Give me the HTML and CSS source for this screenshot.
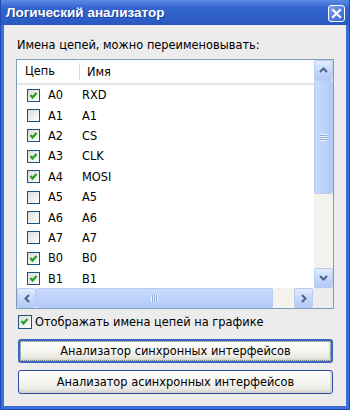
FILE: index.html
```html
<!DOCTYPE html>
<html lang="ru">
<head>
<meta charset="UTF-8">
<title>Логический анализатор</title>
<link rel="stylesheet" href="styles.css">
</head>
<body>

<div class="window">
  <div class="titlebar">
    <span class="title">Логический анализатор</span>
    <span class="close">
      <svg width="15" height="15" viewBox="0 0 15 15"><path d="M4 4 L11 11 M11 4 L4 11" stroke="#fff" stroke-width="2.2" stroke-linecap="square"/></svg>
    </span>
  </div>

  <div class="client">
    <p class="caption">Имена цепей, можно переименовывать:</p>

    <div class="listbox">
      <div class="list-top">
        <div class="list-view">
          <div class="list-header">
            <span class="hcol1">Цепь</span>
            <span class="hcol2">Имя</span>
          </div>
          <div class="row"><span class="cb on"></span><span class="c1">A0</span><span class="c2">RXD</span></div>
          <div class="row"><span class="cb"></span><span class="c1">A1</span><span class="c2">A1</span></div>
          <div class="row"><span class="cb on"></span><span class="c1">A2</span><span class="c2">CS</span></div>
          <div class="row"><span class="cb on"></span><span class="c1">A3</span><span class="c2">CLK</span></div>
          <div class="row"><span class="cb on"></span><span class="c1">A4</span><span class="c2">MOSI</span></div>
          <div class="row"><span class="cb"></span><span class="c1">A5</span><span class="c2">A5</span></div>
          <div class="row"><span class="cb"></span><span class="c1">A6</span><span class="c2">A6</span></div>
          <div class="row"><span class="cb"></span><span class="c1">A7</span><span class="c2">A7</span></div>
          <div class="row"><span class="cb on"></span><span class="c1">B0</span><span class="c2">B0</span></div>
          <div class="row"><span class="cb on"></span><span class="c1">B1</span><span class="c2">B1</span></div>
        </div>

        <div class="vscroll">
          <span class="sbtn">
            <svg width="9" height="6" viewBox="0 0 9 6"><path d="M1 5 L4.5 1.5 L8 5" fill="none" stroke="#4d6185" stroke-width="2"/></svg>
          </span>
          <span class="vthumb"><span class="grip"></span></span>
          <span class="vtrack"></span>
          <span class="sbtn">
            <svg width="9" height="6" viewBox="0 0 9 6"><path d="M1 1 L4.5 4.5 L8 1" fill="none" stroke="#4d6185" stroke-width="2"/></svg>
          </span>
        </div>
      </div>

      <div class="hscroll">
        <span class="sbtn">
          <svg width="6" height="9" viewBox="0 0 6 9"><path d="M5 1 L1.5 4.5 L5 8" fill="none" stroke="#4d6185" stroke-width="2"/></svg>
        </span>
        <span class="hthumb"><span class="grip"></span></span>
        <span class="htrack"></span>
        <span class="sbtn">
          <svg width="6" height="9" viewBox="0 0 6 9"><path d="M1 1 L4.5 4.5 L1 8" fill="none" stroke="#4d6185" stroke-width="2"/></svg>
        </span>
        <span class="corner"></span>
      </div>
    </div>

    <label class="check-line"><span class="cb on"></span>Отображать имена цепей на графике</label>

    <button class="btn default">Анализатор синхронных интерфейсов</button>
    <button class="btn">Анализатор асинхронных интерфейсов</button>
  </div>
</div>

</body>
</html>
```

FILE: styles.css
```css
body {
  margin: 0;
  background: #fff;
  font-family: "DejaVu Sans", Verdana, sans-serif;
  font-size: 11.4px;
  color: #000;
}

.window {
  width: 350px;
  height: 410px;
  box-sizing: border-box;
  display: flex;
  flex-direction: column;
  background: #3d6fd4;
  border: 1px solid #1c4bb4;
  border-top: 0;
}

.titlebar {
  height: 25px;
  display: flex;
  align-items: center;
  justify-content: space-between;
  padding: 0 4px 0 5px;
  background: linear-gradient(#5b8ae6, #3566cf 30%, #2c5cc6 80%, #2a58bf);
}
.title {
  color: #fff;
  font-family: "Liberation Sans", Arial, sans-serif;
  font-weight: bold;
  font-size: 13.5px;
  text-shadow: 1px 1px 0 #1a3f9a;
}
.close {
  width: 15px;
  height: 15px;
  border: 1px solid #fff;
  border-radius: 3px;
  background: linear-gradient(135deg, #7ea6ee, #4a7bdc 60%, #3a69cc);
  display: flex;
  margin-top: 1px;
}

.client {
  flex: 1;
  margin: 0 3px 3px 3px;
  background: #ececec;
  padding: 13px 12px 0 12px;
  display: flex;
  flex-direction: column;
}

.caption {
  margin: 0 0 7px 1px;
  line-height: 14px;
}

.listbox {
  height: 250px;
  box-sizing: border-box;
  border: 1px solid #7f9db9;
  background: #fff;
  display: flex;
  flex-direction: column;
}
.list-top {
  flex: 1;
  display: flex;
  overflow: hidden;
}
.list-view {
  flex: 1;
  overflow: hidden;
}

.list-header {
  height: 23px;
  display: flex;
  align-items: center;
  border-bottom: 2px solid #e4e4e0;
}
.hcol1 {
  width: 54px;
  padding-left: 8px;
  border-right: 1px solid #dcdcd6;
  line-height: 17px;
}
.hcol2 {
  padding-left: 7px;
}

.row {
  height: 20.4px;
  display: flex;
  align-items: center;
  padding-left: 10px;
}
.c1 {
  width: 34px;
  padding-left: 8px;
}

.cb {
  width: 11px;
  height: 11px;
  border: 1px solid #1c5180;
  background: linear-gradient(135deg, #dcdcd7, #fff);
  display: inline-block;
  flex: none;
}
.cb.on {
  background: url("data:image/svg+xml;utf8,<svg xmlns='http://www.w3.org/2000/svg' width='11' height='11'><path d='M2.5 5 L4.5 7.5 L8.5 3' fill='none' stroke='%2321a121' stroke-width='2.2'/></svg>"), linear-gradient(135deg, #dcdcd7, #fff);
}

.vscroll {
  width: 19px;
  display: flex;
  flex-direction: column;
  background: #f4f3ee;
}
.hscroll {
  height: 20px;
  display: flex;
  background: #f4f3ee;
}
.sbtn {
  width: 19px;
  height: 20px;
  box-sizing: border-box;
  border: 1px solid #b7cbf3;
  border-radius: 2px;
  background: linear-gradient(#e3ecfd, #c3d5fb 60%, #b3cbf6);
  display: flex;
  align-items: center;
  justify-content: center;
  flex: none;
}
.vthumb {
  height: 114px;
  box-sizing: border-box;
  border: 1px solid #b8ccf5;
  border-radius: 2px;
  background: linear-gradient(90deg, #cadbfd, #bcd2fb 60%, #b0c8f5);
  display: flex;
  align-items: center;
  justify-content: center;
}
.vthumb .grip {
  width: 7px;
  height: 7px;
  background: repeating-linear-gradient(#eef3fe 0 1px, #8fa8dc 1px 2px);
}
.vtrack {
  flex: 1;
}
.hthumb {
  width: 237px;
  box-sizing: border-box;
  border: 1px solid #b8ccf5;
  border-radius: 2px;
  background: linear-gradient(#cadbfd, #bcd2fb 60%, #b0c8f5);
  display: flex;
  align-items: center;
  justify-content: center;
}
.hthumb .grip {
  width: 7px;
  height: 7px;
  background: repeating-linear-gradient(90deg, #eef3fe 0 1px, #8fa8dc 1px 2px);
}
.htrack {
  flex: 1;
}
.corner {
  width: 20px;
  background: #ececec;
}

.check-line {
  display: flex;
  align-items: center;
  gap: 3px;
  margin: 6px 0 0 2px;
  line-height: 14px;
}
.check-line .cb {
  width: 12px;
  height: 12px;
}

.btn {
  height: 24px;
  margin: 10px 1px 0 2px;
  border: 1px solid #2f4f9e;
  border-radius: 3px;
  background: linear-gradient(#fff, #f7f6f2 45%, #ebeae5 80%, #d2cfc6);
  box-shadow: inset -2px 0 1px #dcdad3;
  font-family: "DejaVu Sans", Verdana, sans-serif;
  font-size: 11.4px;
  color: #000;
  padding: 0;
}
.btn + .btn {
  margin-top: 7px;
}
.btn.default {
  border: 2px solid #3d64c4;
  box-shadow: inset 0 0 0 1px #b7d0f6, inset -2px 0 1px #dcdad3;
  outline: 1px dotted #7a8a7a;
  outline-offset: -3px;
}
```
